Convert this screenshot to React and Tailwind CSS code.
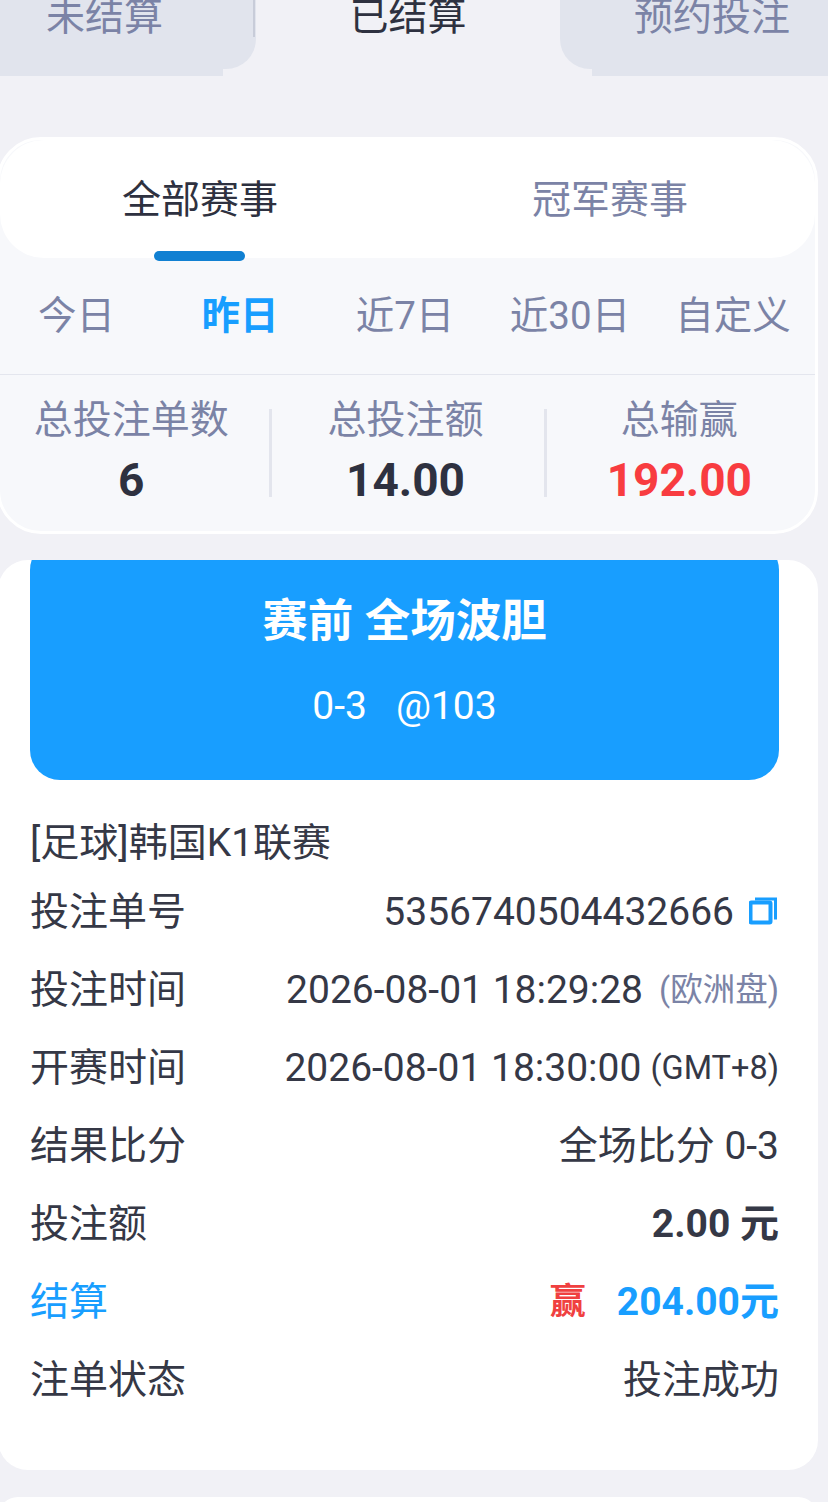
const ff = { fontFamily: '"Roboto","Noto Sans CJK SC",sans-serif' };

function Row({ label, labelClass = "text-[#353846]", children }) {
  return (
    <div className="flex h-[78px] items-center justify-between">
      <span className={labelClass}>{label}</span>
      <div className="flex items-center">{children}</div>
    </div>
  );
}

function Stat({ label, value, valueClass = "text-[#2e3140]" }) {
  return (
    <div className="flex flex-col items-center">
      <span className="text-[39px] leading-[46px] text-[#7b83a6]">{label}</span>
      <span className={`mt-[14px] text-[46px] leading-[46px] font-bold ${valueClass}`}>{value}</span>
    </div>
  );
}

export default function App() {
  return (
    <div style={ff} className="h-[1502px] w-[828px] overflow-hidden bg-[#f1f1f6]">
      <div className="flex h-[76px] justify-between">
        <div className="flex w-[256px] flex-col">
          <div className="relative flex h-[69px] items-start rounded-br-[30px] bg-[#e1e4ed]">
            <span className="ml-[46px] mt-[-8px] text-[39px] leading-[50px] text-[#7b83a6]">未结算</span>
            <span className="absolute right-[1px] top-0 h-[37px] w-[2px] bg-[#c8ccd9]" />
          </div>
          <div className="h-[7px] w-[223px] bg-[#e1e4ed]" />
        </div>
        <span className="mt-[-8px] text-[39px] leading-[50px] text-[#2e3140]">已结算</span>
        <div className="flex w-[268px] flex-col items-end">
          <div className="flex h-[69px] w-full items-start rounded-bl-[30px] bg-[#e1e4ed]">
            <span className="ml-[74px] mt-[-8px] text-[39px] leading-[50px] text-[#7b83a6]">预约投注</span>
          </div>
          <div className="h-[7px] w-[236px] bg-[#e1e4ed]" />
        </div>
      </div>

      <div className="ml-[-3px] mt-[61px] h-[397px] w-[821px] overflow-hidden rounded-[44px] border-[3px] border-white bg-[#f7f8fb]">
        <div className="relative flex h-[118px] rounded-[44px] bg-white">
          <div className="flex w-[400px] shrink-0 items-center justify-center pt-[2px] text-[39px] text-[#2e3140]">全部赛事</div>
          <div className="flex w-[420px] shrink-0 items-center justify-center pt-[2px] text-[39px] text-[#7b83a6]">冠军赛事</div>
          <span className="absolute left-[154px] top-[111px] h-[10px] w-[91px] rounded-[5px] bg-[#1180d2]" />
        </div>
        <div className="ml-[-7.5px] grid h-[116px] w-[825px] grid-cols-5 items-center justify-items-center text-[38.5px] text-[#7b83a6]">
          <span className="ml-[3px]">今日</span>
          <span className="font-bold text-[#189eff]">昨日</span>
          <span>近7日</span>
          <span>近30日</span>
          <span className="mr-[4px]">自定义</span>
        </div>
        <div className="flex h-[156px] border-t border-[#e4e6ee]">
          <div className="flex w-[270px] justify-center pt-[22px] pr-[7px]">
            <Stat label="总投注单数" value="6" />
          </div>
          <div className="mt-[34px] h-[88px] w-[3px] bg-[#e3e5ed]" />
          <div className="flex w-[272px] justify-center pt-[22px] pr-[5px]">
            <Stat label="总投注额" value="14.00" />
          </div>
          <div className="mt-[34px] h-[88px] w-[3px] bg-[#e3e5ed]" />
          <div className="flex w-[269px] justify-center pt-[22px] pr-[3px]">
            <Stat label="总输赢" value="192.00" valueClass="text-[#f83c40]" />
          </div>
        </div>
      </div>

      <div className="ml-[-2px] mt-[26px] h-[910px] w-[820px] overflow-hidden rounded-[30px] bg-white pl-[32px] pr-[39px]">
        <div className="mt-[-20px] flex h-[240px] flex-col items-center rounded-[30px] bg-[#189eff] text-white">
          <span className="mt-[54px] text-[45.5px] leading-[56px] font-bold">赛前 全场波胆</span>
          <span className="mt-[33px] text-[39px] leading-[46px] whitespace-pre">0-3   @103</span>
        </div>
        <div className="mt-[39px] mb-[6px] text-[39px] leading-[48px] text-[#353846]">[足球]韩国K1联赛</div>
        <div className="text-[39px] text-[#353846]">
          <Row label="投注单号">
            <span>5356740504432666</span>
            <svg className="ml-[15px] mr-[1px] mt-[-2px]" width="29" height="29" viewBox="0 0 29 29" fill="none" stroke="#189eff">
              <rect x="1.5" y="5.5" width="20" height="20" rx="1" strokeWidth="4" />
              <path d="M6 2h20.5v20.5" strokeWidth="3" />
            </svg>
          </Row>
          <Row label="投注时间">
            <span>2026-08-01 18:29:28</span>
            <span className="ml-[16px] text-[32.5px] text-[#7b83a6]">(欧洲盘)</span>
          </Row>
          <Row label="开赛时间">
            <span>2026-08-01 18:30:00</span>
            <span className="ml-[9px] text-[32.5px]">(GMT+8)</span>
          </Row>
          <Row label="结果比分">
            <span>全场比分 0-3</span>
          </Row>
          <Row label="投注额">
            <span className="font-bold">2.00 元</span>
          </Row>
          <Row label="结算" labelClass="text-[#189eff]">
            <span className="text-[36px] font-bold text-[#f04040]">赢</span>
            <span className="ml-[31px] font-bold text-[#189eff]">204.00元</span>
          </Row>
          <Row label="注单状态">
            <span>投注成功</span>
          </Row>
        </div>
      </div>

      <div className="ml-[-2px] mt-[27px] h-[40px] w-[820px] rounded-[30px] bg-white" />
    </div>
  );
}
